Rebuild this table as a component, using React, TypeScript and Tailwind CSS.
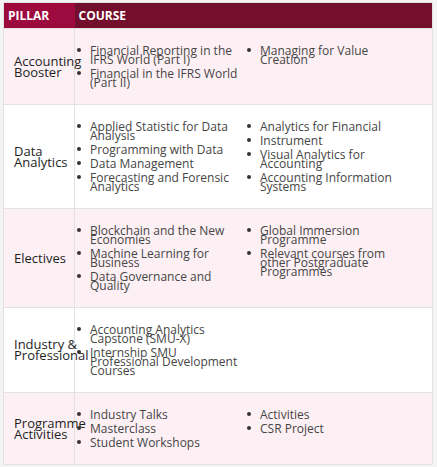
import React from 'react';

interface Row {
  pillar: string[];
  left: string[];
  right: string[];
}

const rows: Row[] = [
  {
    pillar: ['Accounting', 'Booster'],
    left: ['Financial Reporting in the IFRS World (Part I)', 'Financial in the IFRS World (Part II)'],
    right: ['Managing for Value Creation'],
  },
  {
    pillar: ['Data', 'Analytics'],
    left: ['Applied Statistic for Data Analysis', 'Programming with Data', 'Data Management', 'Forecasting and Forensic Analytics'],
    right: ['Analytics for Financial', 'Instrument', 'Visual Analytics for Accounting', 'Accounting Information Systems'],
  },
  {
    pillar: ['Electives'],
    left: ['Blockchain and the New Economies', 'Machine Learning for Business', 'Data Governance and Quality'],
    right: ['Global Immersion Programme', 'Relevant courses from other Postgraduate Programmes'],
  },
  {
    pillar: ['Industry &', 'Professional'],
    left: ['Accounting Analytics Capstone (SMU-X)', 'Internship SMU Professional Development Courses'],
    right: [],
  },
  {
    pillar: ['Programme', 'Activities'],
    left: ['Industry Talks', 'Masterclass', 'Student Workshops'],
    right: ['Activities', 'CSR Project'],
  },
];

const CourseList: React.FC<{ items: string[] }> = ({ items }) => (
  <ul className="flex flex-col gap-[5px]">
    {items.map((item) => (
      <li key={item} className="flex items-start">
        <span className="w-[15px] shrink-0 pl-[2px] pt-[2px]">
          <span className="block h-[4px] w-[4px] rounded-full bg-[#333]" />
        </span>
        <span className="w-[152px] text-[#454545]">{item}</span>
      </li>
    ))}
  </ul>
);

const App: React.FC = () => {
  return (
    <div className="min-h-screen bg-[#f4f4f4] pt-[2px] pl-[3px] font-['Open_Sans',sans-serif]">
      <table className="w-[430px] table-fixed border-collapse border border-[#e2e2e2]">
        <colgroup>
          <col className="w-[71px]" />
          <col />
        </colgroup>
        <thead>
          <tr className="h-[26px]">
            <th className="bg-[#9c0a3e] pl-[4px] text-left text-[12px] font-bold text-white">PILLAR</th>
            <th className="bg-[#730f2c] pl-[4px] text-left text-[12px] font-bold text-white">COURSE</th>
          </tr>
        </thead>
        <tbody>
          {rows.map((row, i) => (
            <tr key={row.pillar.join(' ')} className={i % 2 === 0 ? 'bg-[#fdf0f4]' : 'bg-white'}>
              <td className="border border-[#e2e2e2] pl-[10px] align-middle text-[13px] leading-[11px] whitespace-nowrap text-[#1e1e1e]">
                {row.pillar.map((p) => (
                  <div key={p}>{p}</div>
                ))}
              </td>
              <td className="border border-[#e2e2e2] py-[17px] align-middle text-[12px] leading-[9px]">
                <div className="grid grid-cols-[170px_170px] items-start">
                  <CourseList items={row.left} />
                  {row.right.length > 0 ? <CourseList items={row.right} /> : <div />}
                </div>
              </td>
            </tr>
          ))}
        </tbody>
      </table>
    </div>
  );
};

export default App;
